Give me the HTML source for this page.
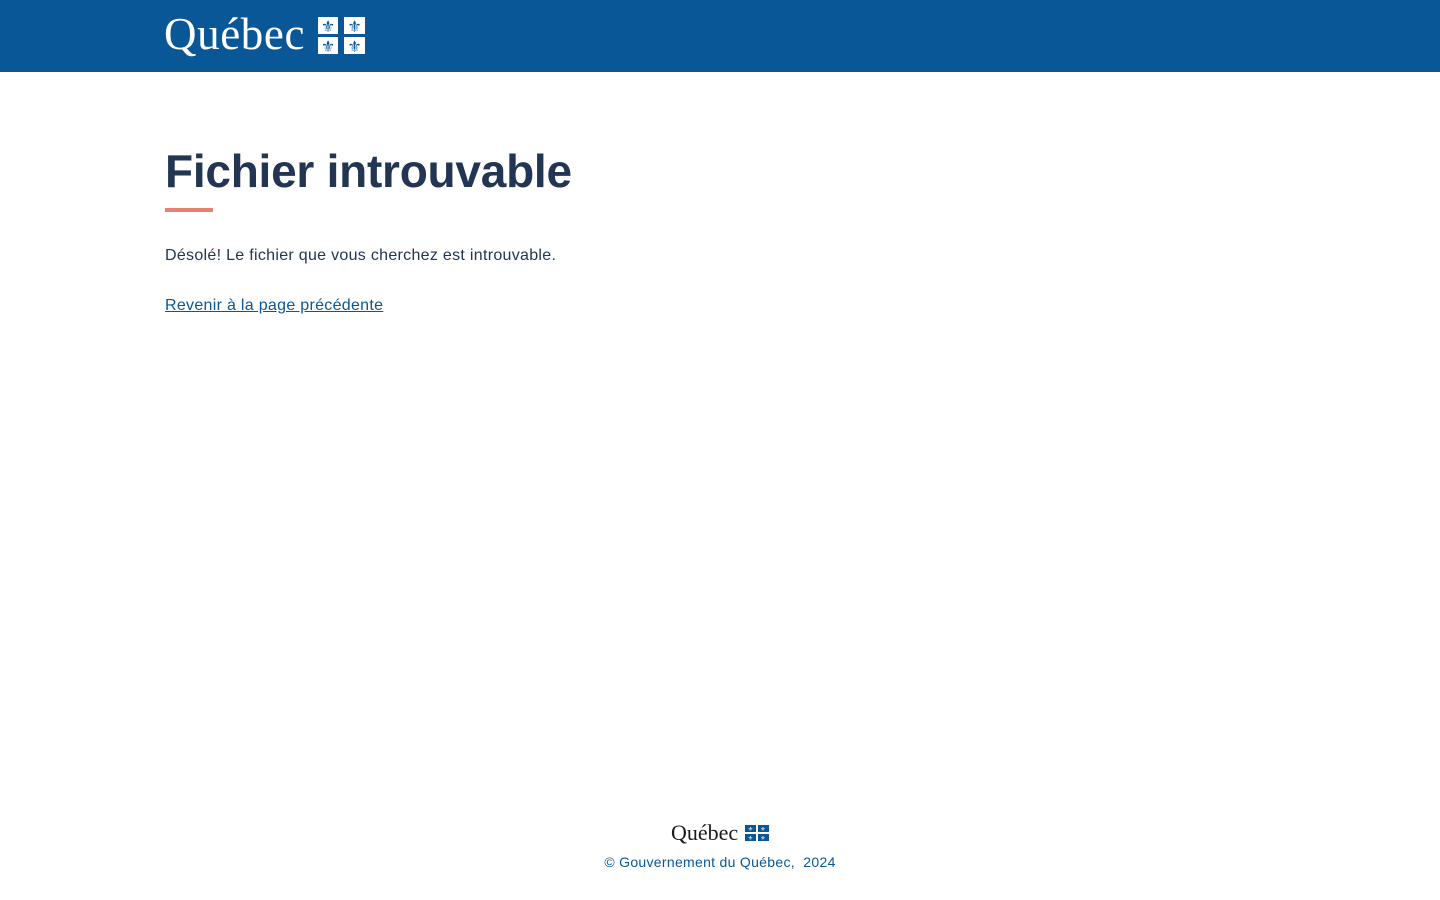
<!DOCTYPE html>
<html><head><meta charset="utf-8"><style>
body{margin:0;background:#fff;font-family:"Liberation Sans",sans-serif;width:1440px;height:900px;position:relative;overflow:hidden}
.hdr{height:72px;background:#095797;position:relative}
.logo{position:absolute;font-family:"Liberation Serif",serif;white-space:nowrap}
.flag{position:absolute;}
h1{position:absolute;left:165px;top:144px;margin:0;font-size:46px;font-weight:bold;color:#223654;letter-spacing:-0.25px}
.bar{position:absolute;left:165px;top:208px;width:48px;height:4px;background:#e58271}
p{position:absolute;left:165px;margin:0;font-size:16px;color:#223654;letter-spacing:0.3px}
a{color:#095797}
</style></head><body>
<div class="hdr">
<div class="logo" style="left:164px;top:9px;font-size:45px;color:#fff;letter-spacing:0.6px;line-height:50px">Québec</div>
<svg class="flag" style="left:318px;top:17px" width="48" height="38" viewBox="0 0 48 38">
<g fill="#fff"><rect x="0" y="0" width="20" height="17"/><rect x="26" y="0" width="21" height="17"/><rect x="0" y="20" width="20" height="17"/><rect x="26" y="20" width="21" height="17"/></g>
<g fill="#095797" font-size="16" font-family="DejaVu Sans" text-anchor="middle"><text x="10" y="15">⚜</text><text x="36.5" y="15">⚜</text><text x="10" y="35">⚜</text><text x="36.5" y="35">⚜</text></g>
</svg>
</div>
<h1>Fichier introuvable</h1>
<div class="bar"></div>
<p style="top:247px">Désolé! Le fichier que vous cherchez est introuvable.</p>
<p style="top:297px"><a href="#">Revenir à la page précédente</a></p>
<div class="logo" style="left:671px;top:821px;font-size:22px;color:#1a1a1a;line-height:24px;letter-spacing:0px">Québec</div>
<svg class="flag" style="left:745px;top:825px" width="24" height="16" viewBox="0 0 24 16">
<rect width="24" height="16" fill="#095797"/><rect x="11" y="0" width="2" height="16" fill="#fff"/><rect x="0" y="7" width="24" height="2" fill="#fff"/>
<g fill="#fff" font-size="6" font-family="DejaVu Sans" text-anchor="middle"><text x="5.5" y="6">⚜</text><text x="18" y="6">⚜</text><text x="5.5" y="15">⚜</text><text x="18" y="15">⚜</text></g>
</svg>
<div style="position:absolute;left:0;width:1440px;top:854px;text-align:center;font-size:14px;color:#095797;letter-spacing:0.3px">© Gouvernement du Québec,&nbsp; 2024</div>
</body></html>
